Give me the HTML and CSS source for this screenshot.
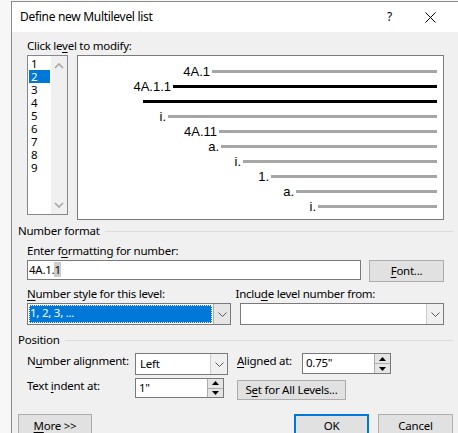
FILE: index.html
```html
<!DOCTYPE html>
<html>
<head>
<meta charset="utf-8">
<title>Define new Multilevel list</title>
<link rel="stylesheet" href="styles.css">
</head>
<body>
<div class="window">
  <div class="titlebar">
    <span class="title">Define new Multilevel list</span>
    <span class="help">?</span>
    <svg class="close" width="11" height="11" viewBox="0 0 11 11"><path d="M0.5 0.5 L10.5 10.5 M10.5 0.5 L0.5 10.5" stroke="#000" stroke-width="1" fill="none"/></svg>
  </div>
  <div class="content">
    <div class="indent">
      <div class="label first">Click le<u>v</u>el to modify:</div>
      <div class="level-row">
        <div class="listbox">
          <ul class="items">
            <li>1</li>
            <li class="sel">2</li>
            <li>3</li>
            <li>4</li>
            <li>5</li>
            <li>6</li>
            <li>7</li>
            <li>8</li>
            <li>9</li>
          </ul>
          <div class="vscroll">
            <svg class="chev" width="10" height="6" viewBox="0 0 10 6"><polyline points="1,5 5,1 9,5" fill="none" stroke="#a6a6a6" stroke-width="1.6"/></svg>
            <svg class="chev" width="10" height="6" viewBox="0 0 10 6"><polyline points="1,1 5,5 9,1" fill="none" stroke="#a6a6a6" stroke-width="1.6"/></svg>
          </div>
        </div>
        <div class="preview">
          <div class="pv-row" style="--x:134px"><span class="num">4A.1</span><span class="bar gray"></span></div>
          <div class="pv-row" style="--x:95px"><span class="num">4A.1.1</span><span class="bar black"></span></div>
          <div class="pv-row" style="--x:65px"><span class="num"></span><span class="bar black"></span></div>
          <div class="pv-row" style="--x:90px"><span class="num">i.</span><span class="bar gray"></span></div>
          <div class="pv-row" style="--x:141px"><span class="num">4A.11</span><span class="bar gray"></span></div>
          <div class="pv-row" style="--x:143px"><span class="num">a.</span><span class="bar gray"></span></div>
          <div class="pv-row" style="--x:165px"><span class="num">i.</span><span class="bar gray"></span></div>
          <div class="pv-row" style="--x:193px"><span class="num">1.</span><span class="bar gray"></span></div>
          <div class="pv-row" style="--x:218px"><span class="num">a.</span><span class="bar gray"></span></div>
          <div class="pv-row" style="--x:240px"><span class="num">i.</span><span class="bar gray"></span></div>
        </div>
      </div>
    </div>

    <div class="group-head head-number">Number format</div>
    <div class="indent">
      <div class="label fmt-label">Enter f<u>o</u>rmatting for number:</div>
      <div class="fmt-row">
        <div class="textbox"><span>4A.1.</span><span class="textsel">1</span></div>
        <div class="button font-btn"><u>F</u>ont...</div>
      </div>
      <div class="two-labels">
        <div class="label col"><u>N</u>umber style for this level:</div>
        <div class="label col">Inclu<u>d</u>e level number from:</div>
      </div>
      <div class="two-selects">
        <div class="combo wide focused">
          <div class="field"><span class="hl">1, 2, 3, ...</span></div>
          <div class="drop"><svg width="9" height="5" viewBox="0 0 9 5"><polyline points="0.5,0.5 4.5,4.5 8.5,0.5" fill="none" stroke="#5a5a5a" stroke-width="1"/></svg></div>
        </div>
        <div class="combo wide">
          <div class="field"></div>
          <div class="drop"><svg width="9" height="5" viewBox="0 0 9 5"><polyline points="0.5,0.5 4.5,4.5 8.5,0.5" fill="none" stroke="#5a5a5a" stroke-width="1"/></svg></div>
        </div>
      </div>
    </div>

    <div class="group-head head-position">Position</div>
    <div class="indent">
      <div class="pos-row row1">
        <div class="label pos-label">N<u>u</u>mber alignment:</div>
        <div class="combo align">
          <div class="field"><span class="val">Left</span></div>
          <div class="drop"><svg width="9" height="5" viewBox="0 0 9 5"><polyline points="0.5,0.5 4.5,4.5 8.5,0.5" fill="none" stroke="#5a5a5a" stroke-width="1"/></svg></div>
        </div>
        <div class="label at-label"><u>A</u>ligned at:</div>
        <div class="spin">
          <div class="field"><span class="val">0.75"</span></div>
          <div class="spin-btns">
            <div class="sb"><svg width="7" height="4" viewBox="0 0 7 4"><polygon points="0,4 3.5,0 7,4" fill="#000"/></svg></div>
            <div class="sb"><svg width="7" height="4" viewBox="0 0 7 4"><polygon points="0,0 7,0 3.5,4" fill="#000"/></svg></div>
          </div>
        </div>
      </div>
      <div class="pos-row row2">
        <div class="label pos-label">Text <u>i</u>ndent at:</div>
        <div class="spin">
          <div class="field"><span class="val">1"</span></div>
          <div class="spin-btns">
            <div class="sb"><svg width="7" height="4" viewBox="0 0 7 4"><polygon points="0,4 3.5,0 7,4" fill="#000"/></svg></div>
            <div class="sb"><svg width="7" height="4" viewBox="0 0 7 4"><polygon points="0,0 7,0 3.5,4" fill="#000"/></svg></div>
          </div>
        </div>
        <div class="button setall">S<u>e</u>t for All Levels...</div>
      </div>
    </div>

    <div class="footer">
      <div class="button more"><u>M</u>ore &gt;&gt;</div>
      <div class="spacer"></div>
      <div class="button ok">OK</div>
      <div class="button cancel">Cancel</div>
    </div>
  </div>
</div>
</body>
</html>
```

FILE: styles.css
```css
* { box-sizing: border-box; }
html, body { margin: 0; padding: 0; }
body {
  width: 458px;
  height: 433px;
  overflow: hidden;
  background: #f7f7f7;
  font-family: "Noto Sans", "Open Sans", "Liberation Sans", sans-serif;
  font-size: 11.5px;
  letter-spacing: -0.25px;
  color: #000;
}
u { text-decoration: underline; text-underline-offset: 2px; }

.window {
  margin: 1px 0 0 11px;
  width: 480px;
  height: 460px;
  border-left: 1px solid #8a8a8a;
  border-top: 1px solid #8a8a8a;
  background: #f0f0f0;
}

.titlebar {
  height: 30px;
  background: #fff;
  display: flex;
  align-items: center;
  padding-left: 8px;
}
.title { flex: 1; line-height: 16px; font-size: 12px; letter-spacing: -0.3px; }
.help { line-height: 16px; margin-right: 33px; font-size: 12px; }
.close { margin-right: 55px; }

.content {
  margin-left: 6px;
  width: 435px;
}
.indent {
  padding-left: 9px;
  width: 426px;
}
.label { line-height: 16px; white-space: nowrap; }
.label.first { padding-top: 6px; }

.level-row {
  display: flex;
  align-items: flex-start;
  gap: 9px;
  margin-top: 1px;
}
.listbox {
  width: 41px;
  height: 160px;
  border: 1px solid #828790;
  background: #fff;
  display: flex;
}
.items {
  list-style: none;
  margin: 0;
  padding: 1px;
  width: 23px;
}
.items li {
  height: 13px;
  line-height: 13px;
  padding-left: 2px;
}
.items li.sel { background: #0078d7; color: #fff; }
.vscroll {
  width: 16px;
  background: #f0f0f0;
  display: flex;
  flex-direction: column;
  justify-content: space-between;
  align-items: center;
  padding: 7px 0 6px;
}

.preview {
  width: 367px;
  height: 165px;
  border: 1px solid #7a7a7a;
  background: #fff;
  padding: 8px 6px 0 0;
  font-family: "Liberation Sans", Arial, sans-serif;
  font-size: 13px;
  letter-spacing: 0;
}
.pv-row {
  display: grid;
  grid-template-columns: var(--x) 1fr;
  align-items: center;
  height: 15px;
  line-height: 15px;
}
.pv-row .num { justify-self: end; padding-right: 2px; white-space: nowrap; }
.bar { height: 3px; }
.bar.gray { background: #a6a6a6; }
.bar.black { background: #000; }

.group-head {
  display: flex;
  align-items: center;
  line-height: 16px;
  white-space: nowrap;
}
.group-head::after {
  content: "";
  flex: 1;
  height: 1px;
  background: #dcdcdc;
  margin-left: 5px;
}
.head-number { margin-top: 3px; }
.head-position { margin-top: 7px; }

.fmt-label { margin-top: 4px; }
.fmt-row {
  display: flex;
  align-items: flex-start;
  margin-top: 1px;
}
.textbox {
  width: 334px;
  height: 20px;
  border: 1px solid #7a7a7a;
  background: #fff;
  line-height: 17px;
  padding-left: 1px;
  padding-top: 0;
}
.textsel { background: #cccccc; }
.button {
  height: 22px;
  border: 1px solid #adadad;
  background: #e1e1e1;
  display: flex;
  align-items: center;
  justify-content: center;
  white-space: nowrap;
  line-height: 16px;
}
.font-btn { width: 75px; margin-left: 8px; }

.two-labels {
  display: flex;
  margin-top: 4px;
}
.two-labels .col { width: 213px; }
.two-selects {
  display: flex;
  gap: 9px;
  margin-top: 1px;
}
.combo {
  display: flex;
  height: 22px;
  border: 1px solid #7a7a7a;
  background: #fff;
}
.combo.wide { width: 204px; }
.combo .field {
  flex: 1;
  padding: 1px;
  display: flex;
  align-items: stretch;
}
.combo .drop {
  width: 17px;
  border-left: 1px solid #cccccc;
  background: #f0f0f0;
  display: flex;
  align-items: center;
  justify-content: center;
}
.combo.focused .drop { background: #e5e5e5; border-left-color: #adadad; }
.hl {
  flex: 1;
  background: #0078d7;
  color: #fff;
  line-height: 16px;
  padding-left: 1px;
  outline: 1px dotted #fff;
  outline-offset: -1px;
}
.val { line-height: 18px; padding-left: 3px; }

.pos-row { display: flex; align-items: flex-start; }
.row1 { margin-top: 5px; }
.row2 { margin-top: 3px; }
.pos-label { width: 108px; }
.combo.align { width: 93px; margin-right: 9px; }
.at-label { width: 65px; }
.spin {
  width: 89px;
  height: 21px;
  display: flex;
  border: 1px solid #7a7a7a;
  background: #fff;
}
.row2 .spin { height: 20px; margin-right: 13px; }
.spin .field { flex: 1; display: flex; }
.spin-btns {
  width: 16px;
  display: flex;
  flex-direction: column;
  background: #e5e5e5;
  border-left: 1px solid #adadad;
}
.sb {
  flex: 1;
  display: flex;
  align-items: center;
  justify-content: center;
}
.sb + .sb { border-top: 1px solid #adadad; }
.setall { width: 109px; margin-top: 2px; height: 20px; }

.footer {
  display: flex;
  margin-top: 14px;
}
.footer .button { height: 23px; width: 74px; }
.spacer { flex: 1; }
.ok { border: 2px solid #0078d7 !important; width: 75px !important; margin-right: 9px; }
.cancel { width: 75px !important; }
```
